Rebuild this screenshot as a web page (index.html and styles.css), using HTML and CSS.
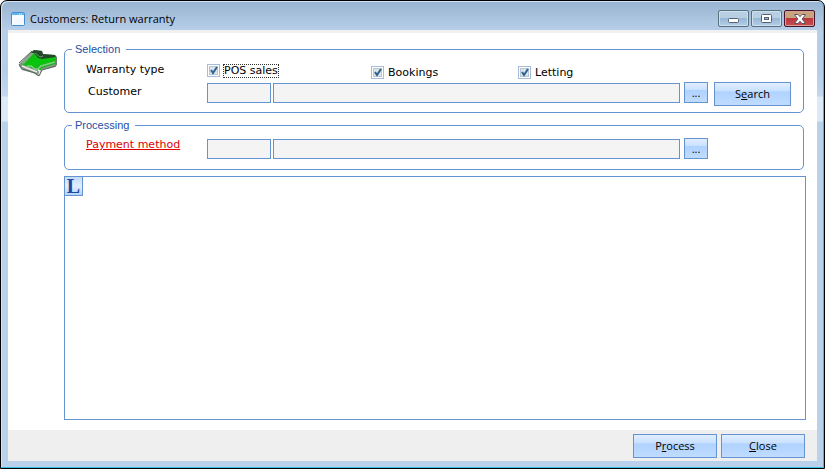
FILE: index.html
```html
<!DOCTYPE html>
<html lang="en">
<head>
  <meta charset="UTF-8" />
  <meta name="viewport" content="width=device-width, initial-scale=1.0" />
  <title>Customers: Return warranty</title>
  <link rel="stylesheet" href="styles.css">
</head>
<body>
  <div class="window">
    <header class="titlebar">
      <svg class="app-icon" width="14" height="14" viewBox="0 0 14 14">
        <rect x="0.5" y="0.5" width="13" height="13" rx="1" fill="#f4f9fe" stroke="#3f8fd2" />
        <path d="M1 1h12v2H1z" fill="#62b4ee" />
        <path d="M8 2h1M10 2h1" stroke="#fff" />
        <path d="M2 12V5h10" fill="none" stroke="#fff" />
      </svg>
      <h1>Customers: Return warranty</h1>
      <div class="window-controls">
        <button type="button" aria-label="Minimize">
          <svg class="low" width="11" height="5" viewBox="0 0 11 5"><rect x="0.5" y="0.5" width="10" height="4" rx="1" fill="#fff" stroke="#54626f" /></svg>
        </button>
        <button type="button" aria-label="Maximize">
          <svg width="11" height="9" viewBox="0 0 11 9"><rect x="0.5" y="0.5" width="10" height="8" rx="1" fill="#fff" stroke="#54626f" /><rect x="3.5" y="3.5" width="4" height="2" fill="#9db9d6" stroke="#54626f" /></svg>
        </button>
        <button type="button" class="close" aria-label="Close window">
          <svg width="12" height="10" viewBox="0 0 12 10"><path d="M.5 .5H4L6 2.7 8 .5H11.500L8.200 5 11.500 9.500H8L6 7.300 4 9.500H.5L3.800 5z" fill="#fff" stroke="#5c5560" /></svg>
        </button>
      </div>
    </header>

    <form class="content">
      <div class="main">
        <svg class="arrow" width="40" height="28" viewBox="0 0 40 28">
          <path d="M1 15L14 2l3-1 7 1 1 3 12 1 2 2v8l-2 2-13 3-2 5-2 1-5-3-11-3-3-4z" fill="#8d978e" />
          <path d="M3 15L16 4l6 3 15 0v8l-13 4-2 3-5-2z" fill="#14b817" />
          <path d="M3 14L13 4l3 0L6 15z" fill="#86a98a" />
          <path d="M7 16L18 5l4 4 15-2v4l-14 5-4-1-4 4z" fill="#09c40c" />
          <path d="M13 4l3-3 8 1 1 3 12 1 1 2-14 2-4-1-4-5z" fill="#23492a" />
          <path d="M17 4l5 4 3-1" fill="none" stroke="#5aa661" />
          <path d="M1 14L14 2M38 8v8" fill="none" stroke="#4b604e" />
          <path d="M9 17h4l4 3 3 0 3-3 14-4" fill="none" stroke="#7fcf83" stroke-width="1.500" />
          <path d="M4 17l15 6M20 21l2 1-1 4" fill="none" stroke="#e6ece6" stroke-width="1.500" />
          <path d="M1 15l3 5 13 4 4 3 3-6 14-4" fill="none" stroke="#59675b" />
        </svg>

        <div class="panels">
          <fieldset>
            <legend>Selection</legend>
            <div class="row checks">
              <span class="label">Warranty type</span>
              <label class="check focused"><input type="checkbox" checked><span>POS sales</span></label>
              <label class="check"><input type="checkbox" checked><span>Bookings</span></label>
              <label class="check"><input type="checkbox" checked><span>Letting</span></label>
            </div>
            <div class="row">
              <label class="label" for="customer">Customer</label>
              <input type="text" class="code" id="customer">
              <input type="text" class="name" aria-label="Customer name">
              <button type="button" class="btn browse" aria-label="Browse customers">...</button>
              <div class="side"><button type="button" class="btn">S<u>e</u>arch</button></div>
            </div>
          </fieldset>

          <fieldset class="processing">
            <legend>Processing</legend>
            <div class="row">
              <div class="label"><a href="#">Payment method</a></div>
              <input type="text" class="code" aria-label="Payment method code">
              <input type="text" class="name" aria-label="Payment method name">
              <button type="button" class="btn browse" aria-label="Browse payment methods">...</button>
              <div class="side"></div>
            </div>
          </fieldset>

          <div class="list">
            <button type="button" class="list-btn">L</button>
          </div>
        </div>
      </div>

      <footer>
        <button type="button" class="btn">P<u>r</u>ocess</button>
        <button type="button" class="btn"><u>C</u>lose</button>
      </footer>
    </form>
  </div>
</body>
</html>
```

FILE: styles.css
```css
* {
  box-sizing: border-box;
}

body {
  margin: 0;
  background: #fff;
  color: #000;
  font: 11px/14px "DejaVu Sans", Verdana, sans-serif;
}

button, input {
  font: inherit;
  color: inherit;
  margin: 0;
  padding: 0;
}

/* Window frame */
.window {
  display: flex;
  flex-direction: column;
  min-height: 100vh;
  padding: 0 6px 7px;
  border: 1px solid #000;
  border-radius: 7px 7px 0 0;
  box-shadow: inset -1px -1px #35bfe2, inset 1px 1px #d5e4f3;
  background: linear-gradient(#99b4d1 0, #b7cfe9 30px, #b4cde9 70px, #c3d8f0 95px, #dce9f6 96px, #dce9f6 120px, #b9d1ea 121px);
}

.titlebar {
  display: flex;
  align-items: center;
  height: 29px;
  padding: 6px 0 0 4px;
}

.titlebar h1 {
  flex: 1;
  margin: 0 0 0 5px;
  font: 11px/16px "Open Sans", "Segoe UI", sans-serif;
}

.window-controls {
  display: flex;
  gap: 2px;
  margin-right: 3px;
}

.window-controls button {
  display: flex;
  align-items: center;
  justify-content: center;
  width: 31px;
  height: 17px;
  border: 1px solid #56717c;
  border-radius: 2px;
  box-shadow: inset 0 0 0 1px #cfe0ee;
  background: linear-gradient(#b8cee2 50%, #98b7d5 50%, #b3cfe9);
}

.window-controls .low {
  margin-top: 4px;
}

.window-controls .close {
  border-color: #43152c;
  box-shadow: inset 0 0 0 1px #d5a28f;
  background: linear-gradient(#c9a37f 50%, #b9383d 50%, #c94c50);
}

/* Content */
.content {
  flex: 1;
  display: flex;
  flex-direction: column;
  margin: 0 1px;
  border-top: 3px solid #f0f0f0;
  background: #fff;
}

.main {
  flex: 1;
  display: flex;
  padding: 9px 11px 10px 10px;
}

.arrow {
  flex: none;
  margin: 7px 6px 0 0;
}

.panels {
  flex: 1;
  display: flex;
  flex-direction: column;
}

fieldset {
  min-width: 0;
  margin: 0 2px 5px 0;
  padding: 7px 12px 6px 20px;
  border: 1px solid #6593cf;
  border-radius: 5px;
}

.processing {
  margin-bottom: 6px;
  padding-top: 6px;
  padding-bottom: 10px;
}

legend {
  margin-left: -13px;
  padding: 0 6px 0 3px;
  color: #1e4fa5;
  font: 11px/14px "Liberation Sans", Arial, sans-serif;
}

.row {
  display: flex;
  align-items: flex-start;
}

.label {
  flex: none;
  width: 122px;
  padding-left: 1px;
}

label.label {
  padding: 3px 0 0 3px;
}

.label a {
  color: #e00000;
}

.checks {
  margin-bottom: 2px;
}

.check {
  display: flex;
  align-items: center;
  gap: 3px;
  width: 147px;
  height: 15px;
  margin-top: 2px;
}

.check span {
  padding: 0 1px;
}

.check.focused {
  width: 164px;
  margin-top: 0;
}

.check.focused span {
  outline: 1px dotted #333;
  outline-offset: -1px;
}

.check input {
  appearance: none;
  width: 13px;
  height: 13px;
  border: 1px solid #a5bddb;
  background: url("data:image/svg+xml,%3Csvg xmlns='http://www.w3.org/2000/svg' viewBox='0 0 11 11'%3E%3Crect x='1.500' y='1.500' width='8' height='8' fill='%23dde4ea' stroke='%23b9c5d2'/%3E%3Cpath d='M3 5l2 3 4-6' fill='none' stroke='%232b638f' stroke-width='2'/%3E%3C/svg%3E");
}

.code, .name {
  height: 20px;
  margin-top: 1px;
  padding: 0 3px;
  border: 1px solid #6593cf;
  background: #f4f4f4;
}

.code {
  width: 64px;
  margin-right: 2px;
}

.name {
  flex: 1;
  min-width: 0;
  margin-right: 4px;
}

.side {
  width: 77px;
  margin-left: 6px;
}

/* Buttons */
.btn {
  width: 100%;
  height: 24px;
  border: 1px solid #6593cf;
  background: linear-gradient(#e1eeff, #c7e0ff 38%, #afd2ff 39%, #c0dcff);
  font: 11px/14px "Open Sans", "Segoe UI", sans-serif;
}

.browse {
  width: 24px;
  height: 21px;
}

/* List area */
.list {
  flex: 1;
  min-height: 120px;
  border: 1px solid #6593cf;
}

.list-btn {
  display: block;
  width: 19px;
  height: 20px;
  margin: -1px;
  border: 1px solid #6593cf;
  background: linear-gradient(#c3dafa, #e2efff 50%, #b4d3fb);
  color: #1f48a0;
  font: bold 20px/18px "Liberation Serif", "Times New Roman", serif;
}

footer {
  display: flex;
  justify-content: flex-end;
  gap: 4px;
  padding: 4px 12px 3px;
  background: #efefef;
}

footer .btn {
  width: 84px;
}
```
